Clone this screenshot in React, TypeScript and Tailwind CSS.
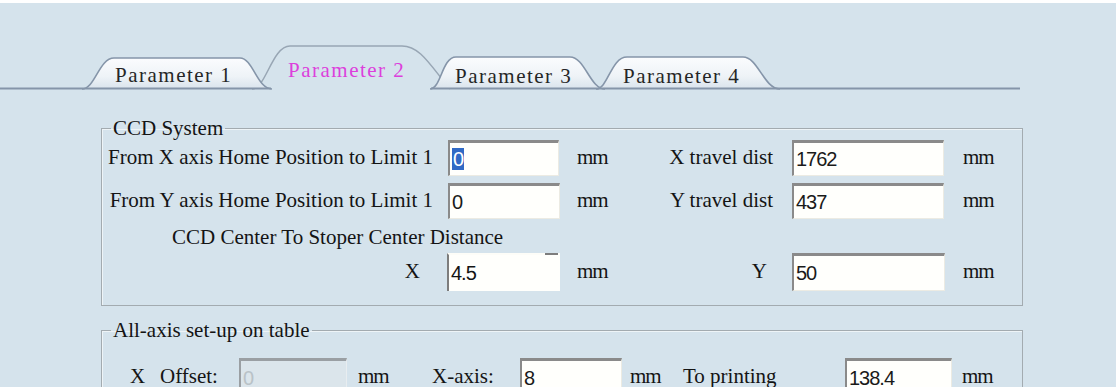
const BG = '#d5e3ec';

function Field({
  value,
  width,
  height = 'h-[36px]',
  selected,
  disabled,
}: {
  value: string;
  width: string;
  height?: string;
  selected?: boolean;
  disabled?: boolean;
}) {
  return (
    <div
      className={`${width} ${height} flex shrink-0 items-center border-t-[3px] border-l-[2px] border-r border-b pl-[2px] font-['Liberation_Sans',sans-serif] text-[20px] tracking-[-1px] ${
        disabled
          ? 'border-t-[#9a9fa3] border-l-[#9a9fa3] border-r-[#e8edf0] border-b-[#e8edf0] bg-[#dbe5eb] text-[#b9c2c7]'
          : 'border-t-[#8a8a8a] border-l-[#8a8a8a] border-r-[#ecebe3] border-b-[#ecebe3] bg-[#fffffc] text-[#1a1a1a]'
      }`}
    >
      {selected ? <span className="bg-[#316ac5] px-[1px] leading-[22px] text-white">{value}</span> : value}
    </div>
  );
}

function Tabs() {
  return (
    <div className="relative h-[87px]">
      <svg className="absolute inset-0" width="1116" height="87" viewBox="0 0 1116 87">
        <defs>
          <linearGradient id="tabg" x1="0" y1="0" x2="0" y2="1">
            <stop offset="0" stopColor="#fbfcfe" />
            <stop offset="0.6" stopColor="#eef3f7" />
            <stop offset="1" stopColor="#d9e3ec" />
          </linearGradient>
        </defs>
        {/* selected tab */}
        <path d="M252 86 C266 86 272 43 290 43 L402 43 C420 43 430 62 450 86 Z" fill={BG} />
        <path d="M252 86 C266 86 272 43 290 43 L402 43 C420 43 430 62 450 86" fill="none" stroke="#98a6b4" strokeWidth="1.5" />
        {/* unselected tabs */}
        {[
          'M82 86 C95 86 99 55 114 55 L240 55 C253 55 257 86 272 86',
          'M430 86 C441 86 442 54 456 54 L570 54 C585 54 590 86 605 86',
          'M596 86 C608 86 611 54 627 54 L743 54 C758 54 764 86 780 86',
        ].map((d, i) => (
          <g key={i}>
            <path d={d + ' Z'} fill="url(#tabg)" />
            <path d={d} fill="none" stroke="#8595a9" strokeWidth="1.6" />
          </g>
        ))}
        <path d="M0 85.5 L271 85.5 M431 85.5 L1020 85.5" stroke="#8595a9" strokeWidth="2" />
      </svg>
      <div className="relative flex items-start pl-[115px] font-['Liberation_Serif',serif] text-[21px] leading-[24px] tracking-[1.5px] text-[#262626]">
        <span className="mt-[60px] w-[173px] shrink-0 whitespace-pre">Parameter 1</span>
        <span className="mt-[55px] w-[167px] shrink-0 whitespace-pre text-[#dc3fdc]">Parameter 2</span>
        <span className="mt-[61px] w-[168px] shrink-0 whitespace-pre">Parameter 3</span>
        <span className="mt-[61px] shrink-0 whitespace-pre">Parameter 4</span>
      </div>
    </div>
  );
}

export default function App() {
  return (
    <div className="h-[387px] w-[1116px] overflow-hidden bg-[#d5e3ec] font-['Liberation_Serif',serif] text-[21px] text-[#141414]">
      <div className="h-[3px] bg-white" />
      <Tabs />

      {/* CCD System */}
      <fieldset className="ml-[101px] mt-[26px] w-[922px] border border-[#a3abb0] pb-[14px] shadow-[inset_1px_1px_0_#eef4f7]">
        <legend className="ml-[9px] px-[2px] leading-[24px]">CCD System</legend>

        <div className="flex h-[36px] items-center whitespace-nowrap">
          <span className="w-[331px] shrink-0 text-right">From X axis Home Position to Limit 1</span>
          <div className="ml-[15px]">
            <Field value="0" width="w-[111px]" selected />
          </div>
          <span className="ml-[18px] w-[31px] shrink-0 tracking-[-1px]">mm</span>
          <span className="w-[165px] shrink-0 text-right">X travel dist</span>
          <div className="ml-[19px]">
            <Field value="1762" width="w-[152px]" />
          </div>
          <span className="ml-[19px] tracking-[-1px]">mm</span>
        </div>

        <div className="mt-[7px] flex h-[36px] items-center whitespace-nowrap">
          <span className="w-[331px] shrink-0 text-right">From Y axis Home Position to Limit 1</span>
          <div className="ml-[15px]">
            <Field value="0" width="w-[112px]" />
          </div>
          <span className="ml-[17px] w-[31px] shrink-0 tracking-[-1px]">mm</span>
          <span className="w-[165px] shrink-0 text-right">Y travel dist</span>
          <div className="ml-[19px]">
            <Field value="437" width="w-[152px]" />
          </div>
          <span className="ml-[19px] tracking-[-1px]">mm</span>
        </div>

        <div className="mt-[6px] pl-[70px] leading-[24px] whitespace-nowrap">CCD Center To Stoper Center Distance</div>

        <div className="mt-[4px] flex h-[38px] items-center whitespace-nowrap">
          <span className="w-[331px] shrink-0 pr-[13px] text-right">X</span>
          <div className="relative ml-[14px] flex h-[38px] w-[113px] shrink-0 items-center border-l-[2px] border-t-[2px] border-l-[#7d7d7d] border-t-[#fdfdf8] bg-[#fffffc] pl-[2px] font-['Liberation_Sans',sans-serif] text-[20px] tracking-[-1px]">
            4.5
            <span className="absolute -top-[2px] right-[2px] h-[2px] w-[13px] bg-[#7d7d7d]" />
          </div>
          <span className="ml-[17px] w-[31px] shrink-0 tracking-[-1px]">mm</span>
          <span className="w-[165px] shrink-0 pr-[6px] text-right">Y</span>
          <div className="ml-[19px]">
            <Field value="50" width="w-[153px]" height="h-[38px]" />
          </div>
          <span className="ml-[18px] tracking-[-1px]">mm</span>
        </div>
      </fieldset>

      {/* All-axis set-up on table */}
      <fieldset className="ml-[101px] mt-[12px] w-[922px] border border-[#a3abb0] pb-[14px] shadow-[inset_1px_1px_0_#eef4f7]">
        <legend className="ml-[9px] px-[2px] leading-[24px]">All-axis set-up on table</legend>
        <div className="mt-[16px] flex h-[37px] items-center whitespace-nowrap">
          <span className="ml-[28px] w-[30px] shrink-0">X</span>
          <span className="w-[79px] shrink-0">Offset:</span>
          <Field value="0" width="w-[108px]" height="h-[37px]" disabled />
          <span className="ml-[11px] w-[74px] shrink-0 tracking-[-1px]">mm</span>
          <span className="w-[88px] shrink-0">X-axis:</span>
          <Field value="8" width="w-[102px]" height="h-[37px]" />
          <span className="ml-[8px] w-[53px] shrink-0 tracking-[-1px]">mm</span>
          <span className="w-[162px] shrink-0">To printing</span>
          <Field value="138.4" width="w-[107px]" height="h-[37px]" />
          <span className="ml-[10px] tracking-[-1px]">mm</span>
        </div>
      </fieldset>
    </div>
  );
}
